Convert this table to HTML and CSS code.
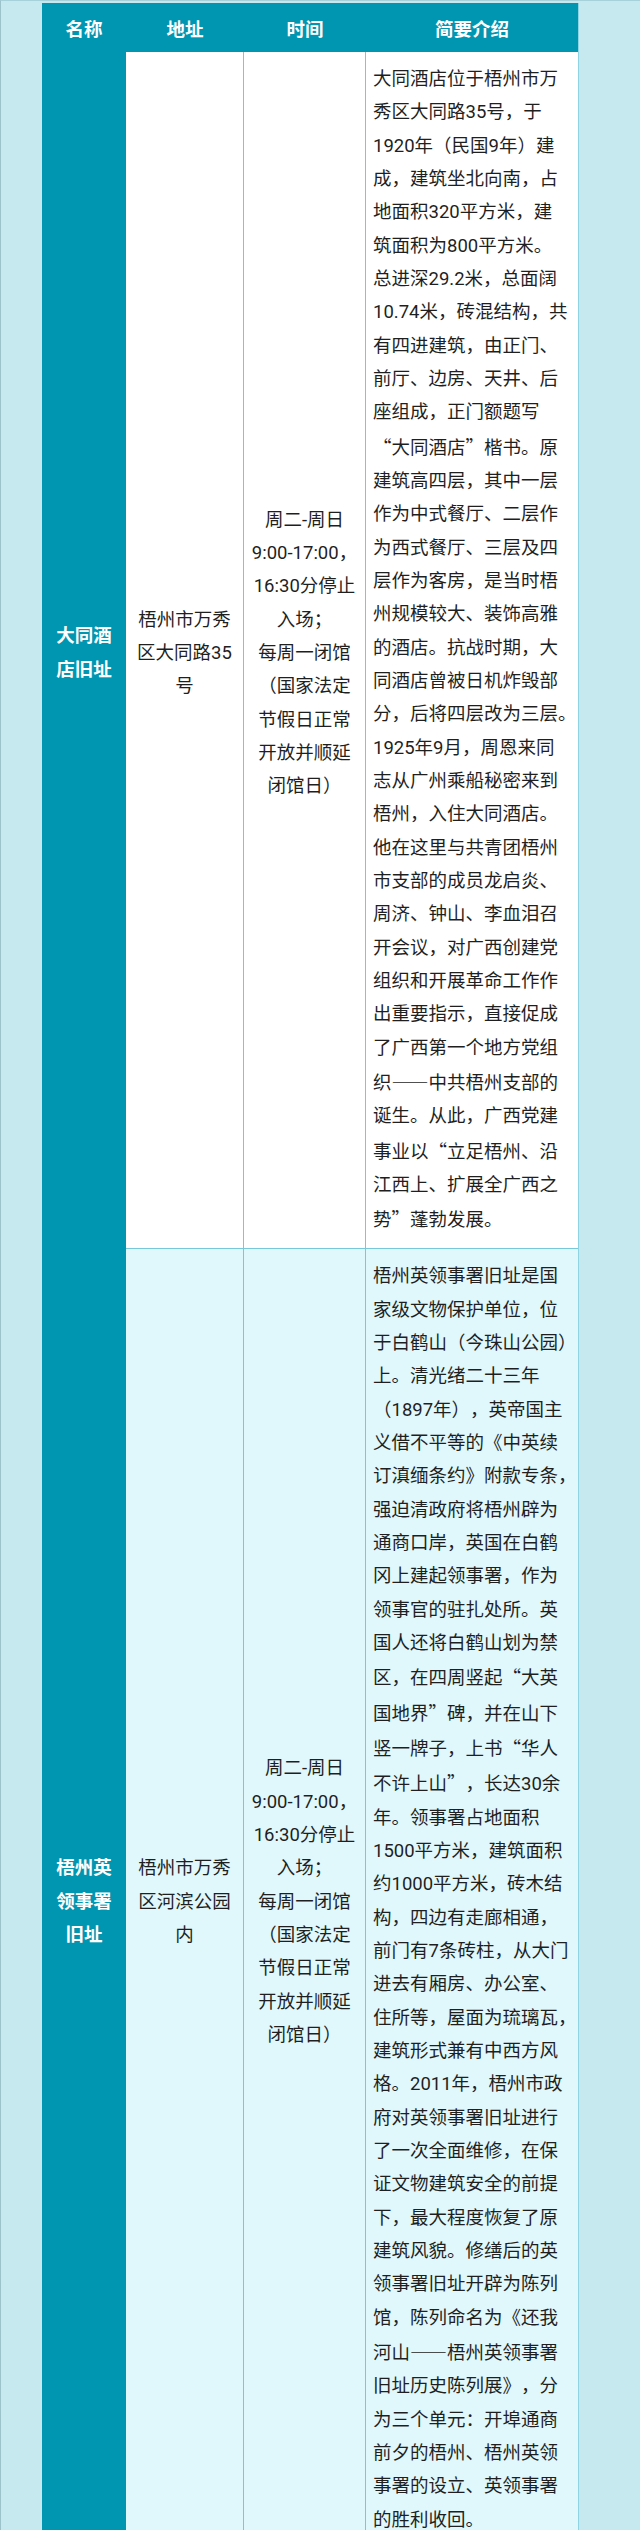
FILE: index.html
```html
<!DOCTYPE html>
<html lang="zh-CN">
<head>
<meta charset="utf-8">
<title>梧州红色旧址</title>
<link rel="stylesheet" href="styles.css">
</head>
<body>
<div class="page">
  <div class="sites">
    <div class="head">名称</div>
    <div class="head">地址</div>
    <div class="head">时间</div>
    <div class="head">简要介绍</div>

    <div class="cell name"><div>大同酒店旧址</div></div>
    <div class="cell mid"><div>梧州市万秀区大同路35号</div></div>
    <div class="cell mid"><div>周二-周日9:00-17:00，16:30分停止入场；<br>每周一闭馆（国家法定节假日正常开放并顺延闭馆日）</div></div>
    <div class="cell desc"><p>大同酒店位于梧州市万<br>秀区大同路35号，于<br>1920年（民国9年）建<br>成，建筑坐北向南，占<br>地面积320平方米，建<br>筑面积为800平方米。<br>总进深29.2米，总面阔<br>10.74米，砖混结构，共<br>有四进建筑，由正门、<br>前厅、边房、天井、后<br>座组成，正门额题写<br><span class="cjk">“</span>大同酒店<span class="cjk">”</span>楷书。原<br>建筑高四层，其中一层<br>作为中式餐厅、二层作<br>为西式餐厅、三层及四<br>层作为客房，是当时梧<br>州规模较大、装饰高雅<br>的酒店。抗战时期，大<br>同酒店曾被日机炸毁部<br>分，后将四层改为三层。<br>1925年9月，周恩来同<br>志从广州乘船秘密来到<br>梧州，入住大同酒店。<br>他在这里与共青团梧州<br>市支部的成员龙启炎、<br>周济、钟山、李血泪召<br>开会议，对广西创建党<br>组织和开展革命工作作<br>出重要指示，直接促成<br>了广西第一个地方党组<br>织<span class="cjk">——</span>中共梧州支部的<br>诞生。从此，广西党建<br>事业以<span class="cjk">“</span>立足梧州、沿<br>江西上、扩展全广西之<br>势<span class="cjk">”</span>蓬勃发展。</p></div>

    <div class="cell name"><div>梧州英领事署旧址</div></div>
    <div class="cell mid alt"><div>梧州市万秀区河滨公园内</div></div>
    <div class="cell mid alt"><div>周二-周日9:00-17:00，16:30分停止入场；<br>每周一闭馆（国家法定节假日正常开放并顺延闭馆日）</div></div>
    <div class="cell desc alt"><p>梧州英领事署旧址是国<br>家级文物保护单位，位<br>于白鹤山（今珠山公园）<br>上。清光绪二十三年<br>（1897年），英帝国主<br>义借不平等的《中英续<br>订滇缅条约》附款专条，<br>强迫清政府将梧州辟为<br>通商口岸，英国在白鹤<br>冈上建起领事署，作为<br>领事官的驻扎处所。英<br>国人还将白鹤山划为禁<br>区，在四周竖起<span class="cjk">“</span>大英<br>国地界<span class="cjk">”</span>碑，并在山下<br>竖一牌子，上书<span class="cjk">“</span>华人<br>不许上山<span class="cjk">”</span>，长达30余<br>年。领事署占地面积<br>1500平方米，建筑面积<br>约1000平方米，砖木结<br>构，四边有走廊相通，<br>前门有7条砖柱，从大门<br>进去有厢房、办公室、<br>住所等，屋面为琉璃瓦，<br>建筑形式兼有中西方风<br>格。2011年，梧州市政<br>府对英领事署旧址进行<br>了一次全面维修，在保<br>证文物建筑安全的前提<br>下，最大程度恢复了原<br>建筑风貌。修缮后的英<br>领事署旧址开辟为陈列<br>馆，陈列命名为《还我<br>河山<span class="cjk">——</span>梧州英领事署<br>旧址历史陈列展》，分<br>为三个单元：开埠通商<br>前夕的梧州、梧州英领<br>事署的设立、英领事署<br>的胜利收回。</p></div>
  </div>
</div>
</body>
</html>
```

FILE: styles.css
```css
html, body {
  margin: 0;
  padding: 0;
  background: #c6e8ef;
}

.page {
  box-sizing: border-box;
  min-height: 2530px;
  border-top: 1px solid #a6d1da;
  border-left: 1px solid #9cc2ca;
  padding: 2px 0 0 41px;
  background: #c6e8ef;
  font-family: Roboto, "Noto Sans CJK SC", sans-serif;
  font-size: 18.5px;
  line-height: 33.333px;
  color: #1f1f1f;
  text-spacing-trim: space-all;
}

.sites {
  display: grid;
  grid-template-columns: 84px 118px 122px 212px;
  width: 536px;
  border-right: 1px solid #8fd4e3;
}

.head {
  box-sizing: border-box;
  height: 49px;
  padding-top: 11px;
  background: #0096b2;
  color: #ffffff;
  font-weight: bold;
  text-align: center;
}

.cell {
  box-sizing: border-box;
  background: #ffffff;
  border-bottom: 1px solid #78c8da;
}

.cell.alt {
  background: #e0f8fc;
}

.name,
.mid {
  display: flex;
  flex-direction: column;
  justify-content: center;
  padding: 18px 7px 11px;
  text-align: center;
}

.name {
  background: #0096b2;
  border-bottom-color: #0096b2;
  color: #ffffff;
  font-weight: bold;
}

.mid {
  border-right: 1px solid #78c8da;
}

.desc {
  padding: 11px 7px;
}

.desc p {
  margin: 0;
  white-space: nowrap;
}

.cjk {
  font-family: "Noto Sans CJK SC", sans-serif;
}
```
